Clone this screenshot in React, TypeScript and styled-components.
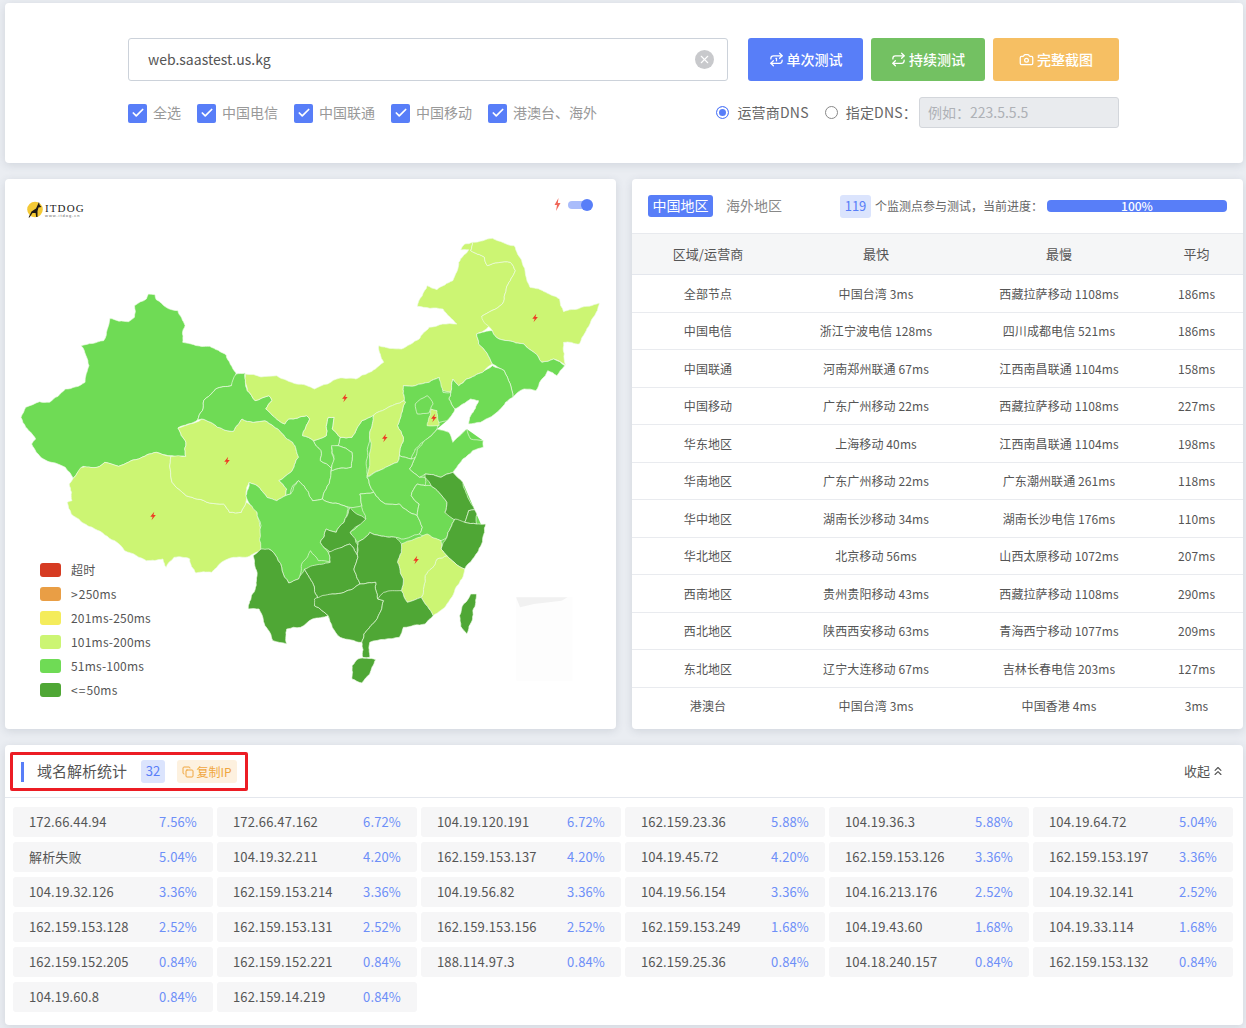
import React from 'react'
import styled, { createGlobalStyle } from 'styled-components'
import { Camera, Check, ChevronsUp, Copy, Repeat, Repeat1, X } from 'lucide-react'

const blue = '#587ef8'
const light = '#ccf573'
const mid = '#6fdb55'
const dark = '#4fa735'

const GlobalStyle = createGlobalStyle`
  html, body { margin: 0; padding: 0; }
  body {
    background: #eaedf2;
    font-family: "Noto Sans CJK SC", "Noto Sans", sans-serif;
    color: #555;
  }
`

const Page = styled.div`
  width: 1238px;
  padding: 3px 3px 3px 5px;
  display: flex;
  flex-direction: column;
  gap: 16px;
`

const Card = styled.section`
  background: #fff;
  border-radius: 4px;
  box-shadow: 0 2px 8px rgba(60, 70, 90, 0.14);
`

const SearchCard = styled(Card)`
  height: 160px;
  box-sizing: border-box;
  padding: 35px 124px 0 123px;
`

const SearchRow = styled.div`
  display: flex;
  height: 43px;
`

const UrlField = styled.div`
  width: 600px;
  box-sizing: border-box;
  border: 1px solid #ccd2da;
  border-radius: 3px;
  padding: 0 13px 0 19px;
  display: flex;
  align-items: center;
  justify-content: space-between;
  font-size: 14px;
  color: #555;
  margin-right: 20px;
`

const UrlText = styled.span`
  margin-top: -2px;
`

const ClearIcon = styled.span`
  width: 19px;
  height: 19px;
  border-radius: 50%;
  background: #c8c9cc;
  color: #fff;
  display: flex;
  align-items: center;
  justify-content: center;
`

const ActionButton = styled.button<{ $bg: string; $w: number }>`
  width: ${({ $w }) => $w}px;
  height: 43px;
  margin-right: 8px;
  border: 0;
  border-radius: 3px;
  background: ${({ $bg }) => $bg};
  color: #fff;
  font: 500 14px "Noto Sans CJK SC", sans-serif;
  display: flex;
  align-items: center;
  justify-content: center;
  gap: 3px;
  padding: 0 0 2px;
  &:last-child { margin-right: 0; }
  svg { margin-top: 2px; }
`

const OptionRow = styled.div`
  display: flex;
  align-items: center;
  justify-content: space-between;
  height: 31px;
  margin-top: 16px;
`

const Checks = styled.div`
  display: flex;
  gap: 16px;
`

const CheckItem = styled.label`
  display: flex;
  align-items: center;
  gap: 6px;
  font-size: 14px;
  line-height: 19px;
  color: #999;
`

const CheckBox = styled.span`
  width: 19px;
  height: 19px;
  border-radius: 2px;
  background: ${blue};
  color: #fff;
  display: flex;
  align-items: center;
  justify-content: center;
  margin-top: 1px;
`

const CheckText = styled.span`
  margin-top: -1px;
`

const DnsGroup = styled.div`
  display: flex;
  align-items: center;
`

const RadioItem = styled.label`
  display: flex;
  align-items: center;
  gap: 8px;
  font-size: 14px;
  letter-spacing: 0.2px;
  color: #666;
  margin-right: 16px;
  padding-bottom: 2px;
  &:nth-child(2) { margin-right: 2px; }
`

const RadioDot = styled.span<{ $on?: boolean }>`
  width: 13px;
  height: 13px;
  box-sizing: border-box;
  margin-top: 1px;
  border-radius: 50%;
  border: 1px solid ${({ $on }) => ($on ? blue : '#888')};
  background: ${({ $on }) => ($on ? blue : '#fff')};
  box-shadow: ${({ $on }) => ($on ? 'inset 0 0 0 2px #fff' : 'none')};
`

const DnsInput = styled.div`
  width: 200px;
  height: 31px;
  box-sizing: border-box;
  border: 1px solid #d3d6db;
  border-radius: 3px;
  background: #e9ebee;
  color: #aeb1b6;
  font-size: 14px;
  line-height: 29px;
  padding-left: 8px;
`

const MainRow = styled.div`
  display: flex;
  gap: 16px;
`

const MapCard = styled(Card)`
  width: 611px;
  height: 550px;
  position: relative;
`

const MapHeader = styled.div`
  height: 50px;
  box-sizing: border-box;
  padding: 20px 23px 0 22px;
  display: flex;
  justify-content: space-between;
  align-items: flex-start;
`

const Logo = styled.div`
  display: flex;
  align-items: center;
  gap: 1px;
  margin-top: 1px;
`

const LogoText = styled.div`
  display: flex;
  flex-direction: column;
  margin-top: 3px;
  font-family: "Liberation Serif", serif;
  color: #222;
  font-size: 11px;
  line-height: 10px;
  letter-spacing: 1.1px;
  b { font-weight: 400; }
  small {
    font-family: "Liberation Sans", sans-serif;
    font-size: 4px;
    line-height: 5px;
    letter-spacing: 1px;
    color: #666;
  }
`

const SpeedSwitch = styled.div`
  display: flex;
  align-items: center;
  gap: 7px;
  margin-top: -1px;
  margin-right: 3px;
`

const Track = styled.span`
  position: relative;
  display: block;
  width: 22px;
  height: 8px;
  border-radius: 4px;
  background: #a9bcfb;
  &::after {
    content: '';
    position: absolute;
    right: -3px;
    top: -2px;
    width: 12px;
    height: 12px;
    border-radius: 50%;
    background: ${blue};
  }
`

const MapSvg = styled.svg`
  display: block;
  width: 611px;
  height: 500px;
`

const Legend = styled.ul`
  position: absolute;
  left: 35px;
  top: 378px;
  margin: 0;
  padding: 0;
  list-style: none;
`

const LegendItem = styled.li`
  height: 24px;
  display: flex;
  align-items: center;
  gap: 10px;
  font-size: 12px;
  letter-spacing: 0.2px;
  color: #555;
`

const Swatch = styled.span<{ $c: string }>`
  width: 21px;
  height: 14px;
  margin-top: 2px;
  border-radius: 3px;
  background: ${({ $c }) => $c};
`

const TableCard = styled(Card)`
  width: 611px;
  height: 550px;
  overflow: hidden;
`

const TableTop = styled.div`
  height: 54px;
  box-sizing: border-box;
  padding: 16px 16px 0;
  display: flex;
  align-items: flex-start;
  font-size: 14px;
`

const Tab = styled.span<{ $active?: boolean }>`
  height: 22px;
  line-height: 20px;
  padding: 0 ${({ $active }) => ($active ? 4.5 : 0)}px;
  margin-right: 13px;
  border-radius: 3px;
  background: ${({ $active }) => ($active ? blue : 'transparent')};
  color: ${({ $active }) => ($active ? '#fff' : '#888')};
`

const CountChip = styled.span<{ $w: number }>`
  width: ${({ $w }) => $w}px;
  height: 23px;
  line-height: 22px;
  text-align: center;
  border-radius: 3px;
  background: #dbe4fd;
  color: ${blue};
  font-size: 13px;
`

const NodeCount = styled(CountChip)`
  margin-left: 45px;
  margin-right: 4px;
`

const ProgressNote = styled.span`
  font-size: 12px;
  line-height: 21px;
  color: #666;
  width: 172px;
  white-space: nowrap;
`

const ProgressBar = styled.div`
  width: 180px;
  height: 12px;
  margin-top: 5px;
  border-radius: 4px;
  background: ${blue};
  color: #fff;
  font-size: 12px;
  font-weight: 500;
  line-height: 12px;
  text-align: center;
`

const SpeedTable = styled.table`
  width: 611px;
  table-layout: fixed;
  border-collapse: collapse;
  text-align: center;
  font-size: 12px;
  letter-spacing: 0.1px;
  color: #555;
  th {
    height: 38px;
    padding: 0 0 2px;
    font-size: 13px;
    font-weight: 400;
    background: #f5f6f7;
    border-top: 1px solid #e8eaee;
    border-bottom: 1px solid #e4e7ed;
  }
  td {
    height: 36.5px;
    padding: 0;
    border-bottom: 1px solid #e9ebef;
  }
  tr:last-child td { border-bottom: 0; }
`

const ResolveCard = styled(Card)`
  height: 280px;
`

const ResolveHeader = styled.div`
  height: 53px;
  box-sizing: border-box;
  border-bottom: 1px solid #e4e7ed;
  padding: 7px 18px 0 5px;
  display: flex;
  align-items: flex-start;
  justify-content: space-between;
`

const HighlightBox = styled.div`
  width: 238px;
  height: 39px;
  box-sizing: border-box;
  border: 3px solid #ec1c24;
  border-radius: 2px;
  padding-left: 8px;
  display: flex;
  align-items: center;
`

const TitleBar = styled.span`
  width: 3px;
  height: 20px;
  background: ${blue};
  margin-right: 13px;
`

const SectionTitle = styled.span`
  font-size: 15px;
  color: #555;
  width: 104px;
  padding-bottom: 3px;
`

const CopyChip = styled.span`
  width: 60px;
  height: 23px;
  margin-left: 12px;
  border-radius: 3px;
  background: #fdf1df;
  color: #f0a63e;
  font-size: 12px;
  display: flex;
  align-items: center;
  justify-content: center;
  gap: 2px;
`

const CollapseLink = styled.span`
  margin-top: 9px;
  font-size: 13px;
  color: #555;
  display: flex;
  align-items: center;
  gap: 1px;
`

const IpGrid = styled.div`
  display: grid;
  grid-template-columns: repeat(6, 200px);
  grid-auto-rows: 30px;
  column-gap: 4px;
  row-gap: 5px;
  padding: 9px 0 0 8px;
`

const IpCell = styled.div`
  border-radius: 3px;
  background: #f6f6f7;
  padding: 0 16px 2px;
  display: flex;
  align-items: center;
  justify-content: space-between;
  font-size: 13px;
  letter-spacing: 0.15px;
  color: #555;
  b { font-weight: 400; color: #6d8ff8; }
`

type Region = { c: string; p: string }
type Pt = [number, number]

const regions: Region[] = [
  { c: mid, p: '375,195 392,197 395,212 420,235 450,245 468,290 462,340 490,347 530,352 572,378 597,432 585,470 545,480 515,515 500,572 450,597 470,640 470,682 435,680 395,670 350,690 300,712 265,700 245,715 210,712 185,748 165,715 130,700 110,690 80,645 90,630 65,595 53,565 65,535 100,518 125,520 165,480 215,460 225,410 205,350 262,335 278,268 325,278 340,265 340,230 370,210' },
  { c: light, p: '185,748 205,715 245,715 265,700 300,712 350,690 395,670 432,682 435,760 470,800 530,822 565,825 580,850 610,850 622,820 650,850 660,900 662,960 640,975 620,985 590,985 560,1000 535,1030 495,1032 480,990 440,985 420,1015 412,990 370,995 345,980 315,965 290,935 240,900 205,878 180,855 170,820 182,815 175,765' },
  { c: light, p: '450,597 510,570 550,595 590,607 612,570 640,580 670,575 710,610 740,640 755,685 735,730 705,755 725,780 722,800 700,815 675,805 650,770 630,760 622,790 622,820 610,850 580,850 565,825 530,822 470,800 435,760 432,682 470,682 470,640' },
  { c: mid, p: '597,435 620,432 625,485 645,515 680,500 688,515 672,540 705,575 720,585 730,570 775,560 783,570 765,620 793,635 812,665 810,695 838,718 836,745 825,780 815,810 790,815 780,790 755,755 740,770 735,795 722,800 725,780 705,755 735,730 755,685 740,640 710,610 670,575 640,580 612,570 590,607 550,595 510,570 500,572 515,515 545,480 585,470' },
  { c: mid, p: '860,625 890,625 915,575 945,558 935,610 930,680 928,745 945,790 910,795 915,830 885,835 870,830 815,810 825,780 836,745 838,725 888,715 890,670 855,650' },
  { c: mid, p: '793,635 825,620 830,565 845,565 840,600 860,625 855,650 838,655 845,690 838,718 810,695 812,665' },
  { c: mid, p: '838,650 855,650 890,670 888,715 838,725 845,690' },
  { c: light, p: '620,435 700,440 750,465 795,480 860,447 900,450 935,430 970,400 958,350 1015,360 1060,330 1085,295 1155,285 1120,240 1055,232 1080,170 1105,182 1145,155 1160,100 1185,62 1165,62 1175,45 1195,40 1190,65 1225,85 1232,110 1290,100 1303,125 1285,165 1270,225 1218,262 1240,290 1230,300 1205,315 1210,345 1245,405 1220,430 1180,450 1160,470 1145,450 1140,490 1120,485 1110,445 1085,460 1050,470 1020,470 1022,515 975,540 945,558 915,575 890,625 860,625 840,600 845,565 830,565 825,620 793,635 765,620 783,570 775,560 730,570 720,585 705,575 672,540 688,515 680,500 645,515 625,485' },
  { c: light, p: '1195,40 1245,28 1300,50 1320,100 1340,175 1380,190 1415,210 1425,248 1465,238 1515,222 1500,265 1480,310 1465,345 1425,340 1430,408 1400,390 1370,400 1350,370 1325,345 1285,335 1255,325 1245,305 1218,262 1270,225 1285,165 1303,125 1290,100 1232,110 1225,85 1190,65' },
  { c: mid, p: '1205,315 1245,305 1255,325 1285,335 1325,345 1350,370 1370,400 1400,390 1428,410 1408,440 1385,425 1355,485 1325,480 1297,505 1275,425 1245,405 1210,345' },
  { c: mid, p: '1245,410 1275,425 1297,505 1265,540 1215,580 1185,585 1190,560 1210,515 1190,510 1150,540 1135,510 1140,490 1145,450 1160,470 1180,450 1220,430' },
  { c: mid, p: '1020,470 1050,470 1085,460 1110,445 1120,490 1140,490 1135,510 1150,540 1130,575 1110,580 1105,600 1085,625 1050,660 1040,690 1010,680 1020,625 1005,590 1025,520 1022,515' },
  { c: mid, p: '1050,525 1080,500 1095,525 1085,552 1055,555' },
  { c: light, p: '1090,540 1105,545 1110,590 1080,590 1085,565' },
  { c: light, p: '1022,515 1025,520 1005,590 1020,625 1010,680 1005,700 975,715 928,742 935,610 945,558 975,540' },
  { c: mid, p: '1050,685 1055,660 1085,625 1105,600 1135,610 1145,640 1180,600 1190,630 1222,635 1222,655 1195,665 1170,690 1155,715 1145,730 1115,745 1075,735 1060,745 1035,720' },
  { c: mid, p: '928,745 975,715 1005,700 1010,680 1040,690 1050,685 1035,720 1060,745 1075,745 1075,770 1055,765 1040,800 1060,825 1055,860 1030,845 1010,825 975,825 945,790' },
  { c: mid, p: '910,795 945,790 975,825 1010,825 1030,845 1055,860 1068,895 1060,915 1015,930 1000,925 960,920 935,910 905,940 885,910 925,870 915,830' },
  { c: mid, p: '1055,765 1075,770 1090,770 1110,790 1130,820 1125,850 1150,870 1130,925 1115,935 1090,925 1060,915 1068,895 1055,860 1060,825 1040,800' },
  { c: dark, p: '1075,735 1115,745 1145,730 1170,760 1185,810 1200,842 1185,845 1175,880 1165,885 1140,865 1125,850 1130,820 1110,790 1090,770 1075,745' },
  { c: dark, p: '1185,845 1200,842 1206,855 1205,885 1175,880' },
  { c: dark, p: '1150,870 1175,880 1205,885 1228,885 1225,910 1210,965 1195,990 1175,1020 1130,980 1115,960 1130,925' },
  { c: light, p: '1130,980 1175,1020 1160,1065 1130,1125 1095,1160 1065,1105 1075,1040 1105,990' },
  { c: light, p: '1015,945 1080,915 1115,935 1115,960 1130,980 1105,990 1075,1040 1065,1105 1030,1120 1015,1085 1020,1050 1005,1000 1015,970' },
  { c: mid, p: '630,760 650,770 675,805 700,815 722,800 735,795 755,755 780,790 790,815 815,810 870,830 880,835 870,880 850,910 825,900 810,940 830,970 835,1000 805,995 785,965 765,1000 755,1050 730,1062 700,985 680,960 660,975 660,890 650,850 622,800' },
  { c: dark, p: '885,835 925,870 905,890 885,910 905,950 905,985 885,945 865,955 835,970 810,940 825,900 850,910 870,880' },
  { c: dark, p: '770,1020 790,1010 835,1000 830,970 865,955 885,945 905,985 895,1020 910,1065 870,1090 840,1095 805,1115 790,1060' },
  { c: dark, p: '905,940 935,910 960,920 1000,925 1015,945 1015,970 1005,1000 1020,1050 1015,1085 975,1090 955,1110 950,1060 910,1065 895,1020 905,985' },
  { c: dark, p: '660,960 680,960 700,985 730,1062 755,1050 770,1020 790,1060 805,1115 795,1130 830,1160 790,1170 760,1195 725,1200 725,1245 690,1235 670,1190 655,1140 628,1140 638,1095 650,1040 640,980' },
  { c: dark, p: '795,1110 840,1095 870,1090 910,1065 950,1060 955,1110 970,1115 950,1175 920,1215 915,1240 860,1225 840,1195 830,1160 795,1130' },
  { c: dark, p: '970,1090 1015,1085 1030,1120 1065,1105 1095,1160 1075,1185 1020,1195 1010,1225 935,1240 935,1285 917,1285 915,1240 920,1215 950,1175 970,1115 955,1110' },
  { c: dark, p: '905,1290 950,1292 935,1335 915,1362 890,1350 890,1310' },
  { c: dark, p: '1190,1095 1205,1095 1203,1120 1195,1170 1180,1215 1165,1192 1162,1160 1172,1125' },
]

// covers the little slivers left between the hand traced provinces
const underlay = '930,560 1020,470 1110,445 1140,490 1150,540 1130,575 1105,600 1135,610 1145,640 1180,600 1222,635 1170,690 1145,730 1170,760 1200,842 1225,910 1175,1020 1095,1160 1075,1180 1000,1190 930,1225 870,1215 840,1190 825,1150 790,1150 730,1170 660,1130 650,1040 660,980 660,900 622,800 722,800 755,685 672,540 760,600 860,640'

// province borders are jagged: split each edge, same result for both sides of a shared edge
const jitter = (n: number) => {
  const s = Math.sin(n * 12.9898) * 43758.5453
  return s - Math.floor(s) - 0.5
}

const splitEdge = (a: Pt, b: Pt, depth: number): Pt[] => {
  const len = Math.hypot(a[0] - b[0], a[1] - b[1])
  if (depth === 0 || len < 10) return []
  const [p, q] = a[0] < b[0] || (a[0] === b[0] && a[1] < b[1]) ? [a, b] : [b, a]
  const mx = (p[0] + q[0]) / 2
  const my = (p[1] + q[1]) / 2
  const off = jitter(mx * 0.37 + my * 1.13) * 0.16
  const m: Pt = [mx - (q[1] - p[1]) * off, my + (q[0] - p[0]) * off]
  return [...splitEdge(a, m, depth - 1), m, ...splitEdge(m, b, depth - 1)]
}

const roughen = (points: string) => {
  const pts = points.split(' ').map((s) => s.split(',').map(Number) as Pt)
  return pts
    .flatMap((a, i) => [a, ...splitEdge(a, pts[(i + 1) % pts.length], 3)])
    .map((p) => `${p[0].toFixed(1)},${p[1].toFixed(1)}`)
    .join(' ')
}

const bolts = [
  [872, 507], [1353, 267], [1097, 567], [973, 627], [574, 696], [387, 861], [1052, 993],
]

const Bolt = ({ x, y }: { x: number; y: number }) => (
  <polygon
    transform={`translate(${x} ${y})`}
    fill="#ee3a24"
    points="3,-13 -7,2 -1,2 -4,13 7,-3 1,-3"
  />
)

const ChinaMap = () => (
  <MapSvg viewBox="12.6 0 1545 1500" preserveAspectRatio="none">
    <rect x="1305" y="1105" width="143" height="250" fill="#fdfdfd" />
    <polygon points="1305,1105 1435,1105 1420,1115 1350,1125 1315,1135" fill="#f1f1f1" />
    <polygon points={underlay} fill={mid} />
    {regions.map((r, i) => (
      <polygon key={i} points={roughen(r.p)} fill={r.c} stroke="#eefbe6" strokeWidth="1.8" strokeLinejoin="round" />
    ))}
    {bolts.map(([x, y]) => <Bolt key={x} x={x} y={y} />)}
  </MapSvg>
)

const LogoMark = () => (
  <svg width="17" height="17" viewBox="0 0 17 17">
    <circle cx="8" cy="8.5" r="7.8" fill="#f4c935" />
    <path d="M12 1 L12.6 4 L14.5 6 L11.5 6.6 L10.5 10 L10.5 16 L9.2 16 L8.6 12 L5.5 12 L2.5 16.5 L1.5 16.5 L4.5 10.5 L9 7.5 Z" fill="#1f1a14" />
  </svg>
)

const SmallBolt = () => (
  <svg width="7" height="13" viewBox="0 0 7 13">
    <polygon points="4.5,0 0.5,7 3,7 2,13 6.5,5 3.8,5" fill="#f0685a" />
  </svg>
)

const legend = [
  ['#d63b22', '超时'],
  ['#e99e45', '>\u200a250ms'],
  ['#f4ec5b', '201ms-250ms'],
  [light, '101ms-200ms'],
  [mid, '51ms-100ms'],
  [dark, '<\u200a=\u200a50ms'],
]

const speedRows = [
  ['全部节点', '中国台湾 3ms', '西藏拉萨移动 1108ms', '186ms'],
  ['中国电信', '浙江宁波电信 128ms', '四川成都电信 521ms', '186ms'],
  ['中国联通', '河南郑州联通 67ms', '江西南昌联通 1104ms', '158ms'],
  ['中国移动', '广东广州移动 22ms', '西藏拉萨移动 1108ms', '227ms'],
  ['华东地区', '上海移动 40ms', '江西南昌联通 1104ms', '198ms'],
  ['华南地区', '广东广州移动 22ms', '广东潮州联通 261ms', '118ms'],
  ['华中地区', '湖南长沙移动 34ms', '湖南长沙电信 176ms', '110ms'],
  ['华北地区', '北京移动 56ms', '山西太原移动 1072ms', '207ms'],
  ['西南地区', '贵州贵阳移动 43ms', '西藏拉萨移动 1108ms', '290ms'],
  ['西北地区', '陕西西安移动 63ms', '青海西宁移动 1077ms', '209ms'],
  ['东北地区', '辽宁大连移动 67ms', '吉林长春电信 203ms', '127ms'],
  ['港澳台', '中国台湾 3ms', '中国香港 4ms', '3ms'],
]

const ips = [
  ['172.66.44.94', '7.56%'], ['172.66.47.162', '6.72%'], ['104.19.120.191', '6.72%'], ['162.159.23.36', '5.88%'], ['104.19.36.3', '5.88%'], ['104.19.64.72', '5.04%'],
  ['解析失败', '5.04%'], ['104.19.32.211', '4.20%'], ['162.159.153.137', '4.20%'], ['104.19.45.72', '4.20%'], ['162.159.153.126', '3.36%'], ['162.159.153.197', '3.36%'],
  ['104.19.32.126', '3.36%'], ['162.159.153.214', '3.36%'], ['104.19.56.82', '3.36%'], ['104.19.56.154', '3.36%'], ['104.16.213.176', '2.52%'], ['104.19.32.141', '2.52%'],
  ['162.159.153.128', '2.52%'], ['162.159.153.131', '2.52%'], ['162.159.153.156', '2.52%'], ['162.159.153.249', '1.68%'], ['104.19.43.60', '1.68%'], ['104.19.33.114', '1.68%'],
  ['162.159.152.205', '0.84%'], ['162.159.152.221', '0.84%'], ['188.114.97.3', '0.84%'], ['162.159.25.36', '0.84%'], ['104.18.240.157', '0.84%'], ['162.159.153.132', '0.84%'],
  ['104.19.60.8', '0.84%'], ['162.159.14.219', '0.84%'],
]

const carriers = ['全选', '中国电信', '中国联通', '中国移动', '港澳台、海外']

export default function App() {
  return (
    <Page>
      <GlobalStyle />
      <SearchCard>
        <SearchRow>
          <UrlField>
            <UrlText>web.saastest.us.kg</UrlText>
            <ClearIcon><X size={13} strokeWidth={2} /></ClearIcon>
          </UrlField>
          <ActionButton $bg="#587ef8" $w={115}><Repeat1 size={15} />单次测试</ActionButton>
          <ActionButton $bg="#73c162" $w={114}><Repeat size={15} />持续测试</ActionButton>
          <ActionButton $bg="#f6bf63" $w={126}><Camera size={15} />完整截图</ActionButton>
        </SearchRow>
        <OptionRow>
          <Checks>
            {carriers.map((c) => (
              <CheckItem key={c}>
                <CheckBox><Check size={14} strokeWidth={3} /></CheckBox>
                <CheckText>{c}</CheckText>
              </CheckItem>
            ))}
          </Checks>
          <DnsGroup>
            <RadioItem><RadioDot $on />运营商DNS</RadioItem>
            <RadioItem><RadioDot />指定DNS：</RadioItem>
            <DnsInput>例如：223.5.5.5</DnsInput>
          </DnsGroup>
        </OptionRow>
      </SearchCard>

      <MainRow>
        <MapCard>
          <MapHeader>
            <Logo>
              <LogoMark />
              <LogoText><b>ITDOG</b><small>www.itdog.cn</small></LogoText>
            </Logo>
            <SpeedSwitch><SmallBolt /><Track /></SpeedSwitch>
          </MapHeader>
          <ChinaMap />
          <Legend>
            {legend.map(([c, t]) => (
              <LegendItem key={t}><Swatch $c={c} />{t}</LegendItem>
            ))}
          </Legend>
        </MapCard>

        <TableCard>
          <TableTop>
            <Tab $active>中国地区</Tab>
            <Tab>海外地区</Tab>
            <NodeCount $w={31}>119</NodeCount>
            <ProgressNote>个监测点参与测试，当前进度：</ProgressNote>
            <ProgressBar>100%</ProgressBar>
          </TableTop>
          <SpeedTable>
            <colgroup>
              <col width="152" />
              <col width="184" />
              <col width="182" />
              <col width="93" />
            </colgroup>
            <thead>
              <tr><th>区域/运营商</th><th>最快</th><th>最慢</th><th>平均</th></tr>
            </thead>
            <tbody>
              {speedRows.map((r) => (
                <tr key={r[0]}>{r.map((v) => <td key={v}>{v}</td>)}</tr>
              ))}
            </tbody>
          </SpeedTable>
        </TableCard>
      </MainRow>

      <ResolveCard>
        <ResolveHeader>
          <HighlightBox>
            <TitleBar />
            <SectionTitle>域名解析统计</SectionTitle>
            <CountChip $w={24}>32</CountChip>
            <CopyChip><Copy size={12} />复制IP</CopyChip>
          </HighlightBox>
          <CollapseLink>收起<ChevronsUp size={14} /></CollapseLink>
        </ResolveHeader>
        <IpGrid>
          {ips.map(([ip, pct]) => (
            <IpCell key={ip}>{ip}<b>{pct}</b></IpCell>
          ))}
        </IpGrid>
      </ResolveCard>
    </Page>
  )
}
